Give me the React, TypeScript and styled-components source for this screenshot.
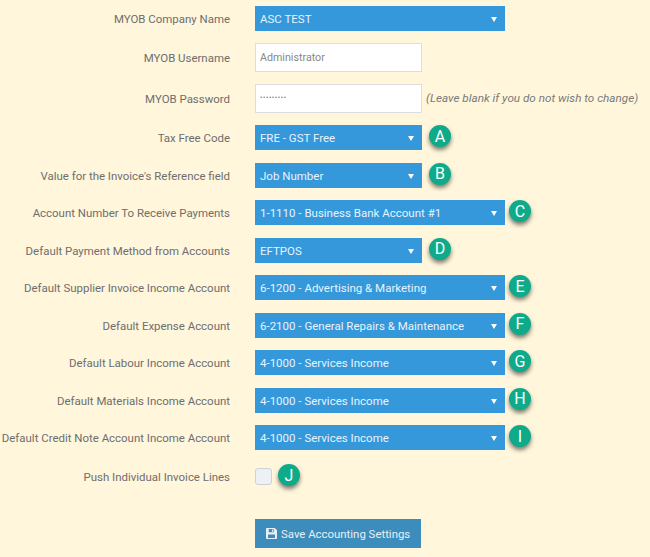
import React from 'react';
import styled, {createGlobalStyle} from 'styled-components';

const GlobalStyle = createGlobalStyle`
	html, body {
		margin: 0;
		padding: 0;
		background: #fff6dc;
		font-family: Roboto, "Liberation Sans", sans-serif;
	}
`;

type SelectRow = {
	label: string;
	value: string;
	wide?: boolean;
	badge: string;
	gap: number;
};

const selectRows: SelectRow[] = [
	{label: 'Tax Free Code', value: 'FRE - GST Free', badge: 'A', gap: 7},
	{label: "Value for the Invoice's Reference field", value: 'Job Number', badge: 'B', gap: 7},
	{label: 'Account Number To Receive Payments', value: '1-1110 - Business Bank Account #1', wide: true, badge: 'C', gap: 4},
	{label: 'Default Payment Method from Accounts', value: 'EFTPOS', badge: 'D', gap: 7},
	{label: 'Default Supplier Invoice Income Account', value: '6-1200 - Advertising & Marketing', wide: true, badge: 'E', gap: 4},
	{label: 'Default Expense Account', value: '6-2100 - General Repairs & Maintenance', wide: true, badge: 'F', gap: 4},
	{label: 'Default Labour Income Account', value: '4-1000 - Services Income', wide: true, badge: 'G', gap: 4},
	{label: 'Default Materials Income Account', value: '4-1000 - Services Income', wide: true, badge: 'H', gap: 4},
	{label: 'Default Credit Note Account Income Account', value: '4-1000 - Services Income', wide: true, badge: 'I', gap: 4}
];

export default function App() {
	return (
		<Page>
			<GlobalStyle />
			<Row>
				<Label>MYOB Company Name</Label>
				<Select $wide>
					ASC TEST
					<Caret />
				</Select>
			</Row>
			<Row>
				<Label>MYOB Username</Label>
				<TextInput>Administrator</TextInput>
			</Row>
			<Row>
				<Label>MYOB Password</Label>
				<TextInput>
					<Dots>•••••••••</Dots>
				</TextInput>
				<Hint>(Leave blank if you do not wish to change)</Hint>
			</Row>
			{selectRows.map((row) => (
				<Row key={row.badge}>
					<Label>{row.label}</Label>
					<Select $wide={row.wide}>
						{row.value}
						<Caret />
					</Select>
					<Badge $gap={row.gap}>{row.badge}</Badge>
				</Row>
			))}
			<CheckRow>
				<Label>Push Individual Invoice Lines</Label>
				<Checkbox />
				<Badge $gap={6}>J</Badge>
			</CheckRow>
			<ButtonRow>
				<SaveButton>
					<svg width="11" height="11" viewBox="0 0 12 12" fill="currentColor" fillRule="evenodd">
						<path d="M1 0h8.500L12 2.500V11a1 1 0 0 1-1 1H1a1 1 0 0 1-1-1V1a1 1 0 0 1 1-1zM3 1.200v3.300h5.500V1.200H3zM6.500 1.700h1.200v2.300H6.500V1.700zM2.200 7v3.800h7.600V7H2.200z" />
					</svg>
					Save Accounting Settings
				</SaveButton>
			</ButtonRow>
		</Page>
	);
}

const Page = styled.div`
	display: flex;
	flex-direction: column;
	gap: 12.5px;
	width: 650px;
	height: 557px;
	padding-top: 5.5px;
	box-sizing: border-box;
	overflow: hidden;
	background: #fff6dc;
`;

const Row = styled.div`
	display: flex;
	align-items: center;
`;

const CheckRow = styled(Row)`
	height: 28px;
`;

const ButtonRow = styled.div`
	display: flex;
	padding-left: 255px;
	margin-top: 16px;
`;

const Label = styled.div`
	flex: none;
	width: 230px;
	margin-right: 25px;
	padding-top: 1px;
	text-align: right;
	font-size: 11.45px;
	color: #6e6e6e;
	white-space: nowrap;
`;

const Select = styled.div<{$wide?: boolean}>`
	position: relative;
	flex: none;
	width: ${(props) => (props.$wide ? 250 : 167)}px;
	height: 25px;
	padding: 1px 0 0 5px;
	box-sizing: border-box;
	display: flex;
	align-items: center;
	background: #3498db;
	color: #e8f3fb;
	font-size: 11.5px;
	white-space: nowrap;
`;

const Caret = styled.span`
	position: absolute;
	right: 8.5px;
	top: 11px;
	width: 0;
	height: 0;
	border-left: 3.5px solid transparent;
	border-right: 3.5px solid transparent;
	border-top: 5px solid #fff;
`;

const TextInput = styled.div`
	flex: none;
	width: 167px;
	height: 28.5px;
	padding-left: 4px;
	box-sizing: border-box;
	display: flex;
	align-items: center;
	background: #fff;
	border: 1px solid #ddd;
	color: #888;
	font-size: 10.7px;
`;

const Dots = styled.span`
	font-size: 7px;
	letter-spacing: 0.6px;
	color: #777;
`;

const Hint = styled.span`
	margin-left: 4px;
	font-size: 11.7px;
	font-style: italic;
	color: #7a7a7a;
	white-space: nowrap;
`;

const Badge = styled.div<{$gap: number}>`
	flex: none;
	width: 22px;
	height: 22px;
	margin-left: ${(props) => props.$gap}px;
	margin-top: -3px;
	border-radius: 50%;
	display: flex;
	align-items: center;
	justify-content: center;
	background: #0dab8a;
	color: #fff;
	font-size: 16px;
	box-shadow: 0 3px 4px rgba(0, 0, 0, 0.5);
`;

const Checkbox = styled.div`
	flex: none;
	width: 17px;
	height: 17px;
	box-sizing: border-box;
	background: #edf0f4;
	border: 1px solid #ccd2da;
	border-radius: 3px;
`;

const SaveButton = styled.button`
	display: flex;
	align-items: center;
	gap: 4px;
	width: 166px;
	height: 29px;
	padding: 0 0 0 11px;
	border: none;
	background: #3c8dbc;
	color: #e6f0f6;
	font-family: inherit;
	font-size: 11.4px;
	white-space: nowrap;
`;
